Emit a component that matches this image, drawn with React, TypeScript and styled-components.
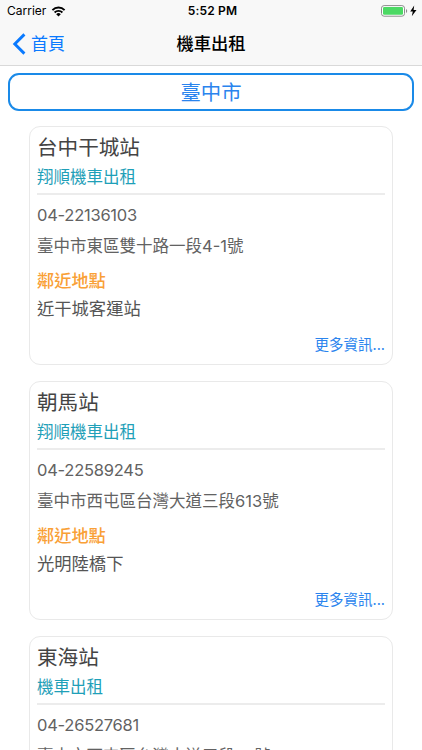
import React from "react";
import styled, { createGlobalStyle } from "styled-components";

const GlobalStyle = createGlobalStyle`
  html, body { margin: 0; padding: 0; background: #fff; overflow: hidden; }
  * { box-sizing: border-box; }
`;

const Screen = styled.div`
  width: 422px;
  height: 750px;
  overflow: hidden;
  background: #fff;
  font-family: Inter, "Noto Sans CJK TC", sans-serif;
  white-space: nowrap;
`;

const Header = styled.header`
  height: 66px;
  background: #f8f8f8;
  border-bottom: 1px solid #d9d9d9;
`;

const StatusBar = styled.div`
  height: 22px;
  display: grid;
  grid-template-columns: 1fr auto 1fr;
  align-items: center;
  padding: 0 5px 0 7px;
  color: #000;
`;

const Carrier = styled.div`
  display: flex;
  align-items: center;
  gap: 5px;
  font-size: 12px;
  line-height: 22px;
`;

const Clock = styled.div`
  font-size: 12px;
  font-weight: 600;
  letter-spacing: 0.15px;
  line-height: 22px;
  padding-left: 1px;
`;

const Power = styled.div`
  display: flex;
  justify-content: flex-end;
  align-items: center;
`;

const NavBar = styled.nav`
  height: 43px;
  display: grid;
  grid-template-columns: 1fr auto 1fr;
  align-items: center;
  padding: 0 12px;
`;

const Back = styled.div`
  display: flex;
  align-items: center;
  gap: 5px;
  color: #0a7aff;
  font-size: 17px;
  line-height: 24px;
`;

const NavTitle = styled.h1`
  margin: 0;
  font-size: 17.3px;
  line-height: 24px;
  font-weight: 500;
  color: #000;
`;

const CityPicker = styled.div`
  margin: 7px 8px 0;
  height: 38px;
  border: 2px solid #1a8ae8;
  border-radius: 11px;
  display: flex;
  align-items: center;
  justify-content: center;
  padding-top: 2px;
  color: #2a84ee;
  font-size: 20.4px;
  line-height: 34px;
`;

const List = styled.main`
  display: flex;
  flex-direction: column;
  gap: 16px;
  padding: 15px 29px 0;
`;

const Card = styled.article`
  flex: none;
  height: 239px;
  border: 1px solid #e9e9e9;
  border-radius: 11px;
  padding: 6px 7px 0;
`;

const StationName = styled.h2`
  margin: 0;
  font-size: 20.6px;
  line-height: 30px;
  font-weight: 400;
  color: #444;
`;

const Company = styled.div`
  font-size: 16.5px;
  line-height: 28px;
  color: #1fa0b8;
`;

const Divider = styled.hr`
  margin: 2px 0 5px;
  border: 0;
  height: 2px;
  background: #ececec;
`;

const Phone = styled.div`
  font-size: 16.5px;
  line-height: 30px;
  letter-spacing: -0.25px;
  color: #626262;
`;

const Address = styled.div`
  margin-top: 1px;
  font-size: 16.5px;
  line-height: 30px;
  color: #626262;
`;

const NearbyLabel = styled.div`
  margin-top: 6px;
  font-size: 17.2px;
  line-height: 28px;
  font-weight: 500;
  color: #f9a036;
`;

const NearbyPlace = styled.div`
  font-size: 17.3px;
  line-height: 28px;
  color: #555;
`;

const More = styled.div`
  margin-top: 10px;
  text-align: right;
  font-size: 14.5px;
  line-height: 24px;
  color: #2a84ee;
`;

const WifiIcon = () => (
  <svg width="15" height="11" viewBox="0 0 14 11">
    <path d="M0.9 4.1a8.6 8.6 0 0 1 12.2 0" fill="none" stroke="#000" strokeWidth="1.9" />
    <path d="M3.1 6.5a5.5 5.5 0 0 1 7.8 0" fill="none" stroke="#000" strokeWidth="1.8" />
    <path d="M7 10.6 4.7 8.2a3.2 3.2 0 0 1 4.6 0z" fill="#000" />
  </svg>
);

const BatteryIcon = () => (
  <svg width="36" height="12" viewBox="0 0 36 12">
    <rect x="0.5" y="0.6" width="23" height="10.6" rx="2.6" fill="#fff" stroke="#8c8c8c" />
    <rect x="2" y="2.1" width="20" height="7.6" rx="1.2" fill="#4cd964" />
    <path d="M25 4v4c1.6-.6 1.6-3.4 0-4z" fill="#8c8c8c" />
    <path d="M33.2 .6 29.2 6.6h2.6l-1 4.6 4.7-6.2h-2.9z" fill="#000" />
  </svg>
);

const ChevronIcon = () => (
  <svg width="14" height="22" viewBox="0 0 14 22">
    <path d="M12.4 1.4 2.8 11l9.6 9.6" fill="none" stroke="#0a7aff" strokeWidth="2.9" />
  </svg>
);

interface Station {
  name: string;
  company: string;
  phone: string;
  address: string;
  nearby: string;
}

const stations: Station[] = [
  { name: "台中干城站", company: "翔順機車出租", phone: "04-22136103", address: "臺中市東區雙十路一段4-1號", nearby: "近干城客運站" },
  { name: "朝馬站", company: "翔順機車出租", phone: "04-22589245", address: "臺中市西屯區台灣大道三段613號", nearby: "光明陸橋下" },
  { name: "東海站", company: "機車出租", phone: "04-26527681", address: "臺中市西屯區台灣大道五段79號", nearby: "東海大學" },
];

const StationCard = ({ station }: { station: Station }) => (
  <Card>
    <StationName>{station.name}</StationName>
    <Company>{station.company}</Company>
    <Divider />
    <Phone>{station.phone}</Phone>
    <Address>{station.address}</Address>
    <NearbyLabel>鄰近地點</NearbyLabel>
    <NearbyPlace>{station.nearby}</NearbyPlace>
    <More>更多資訊...</More>
  </Card>
);

export default function App() {
  return (
    <Screen>
      <GlobalStyle />
      <Header>
        <StatusBar>
          <Carrier>Carrier <WifiIcon /></Carrier>
          <Clock>5:52 PM</Clock>
          <Power><BatteryIcon /></Power>
        </StatusBar>
        <NavBar>
          <Back><ChevronIcon />首頁</Back>
          <NavTitle>機車出租</NavTitle>
        </NavBar>
      </Header>
      <CityPicker>臺中市</CityPicker>
      <List>
        {stations.map((s) => <StationCard key={s.name} station={s} />)}
      </List>
    </Screen>
  );
}
